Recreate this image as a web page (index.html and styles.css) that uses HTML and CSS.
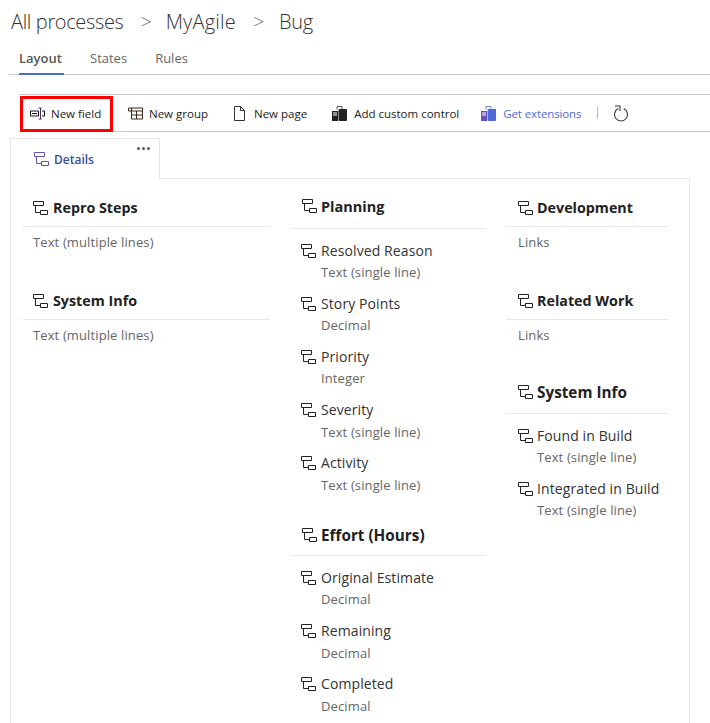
FILE: index.html
```html
<!DOCTYPE html>
<html lang="en">
<head>
<meta charset="utf-8">
<title>Bug layout</title>
<link rel="stylesheet" href="styles.css">
</head>
<body>
<svg class="defs" width="0" height="0" aria-hidden="true">
  <symbol id="tree" viewBox="0 0 15 14">
    <path d="M.5.5h10v4H.5zM7.500 9.500h7v4h-7zM2.500 4.500v7h5" fill="none" stroke="currentColor"/>
  </symbol>
</svg>
<header class="crumbs">
  <span>All processes</span><span class="sep sep-a">&gt;</span><span class="crumb-mid">MyAgile</span><span class="sep sep-b">&gt;</span><span>Bug</span>
</header>
<nav class="tabs">
  <a class="tab active">Layout</a><a class="tab">States</a><a class="tab tab-rules">Rules</a>
</nav>
<div class="toolbar">
  <button class="tool tool-field">
    <svg class="ti" viewBox="0 0 15 14"><path d="M.5 4.500h8v5h-8zM2 7h5" fill="none" stroke="#111"/><path d="M8.500 1.500h3M8.500 12.500h3M10.500 1.500v11" fill="none" stroke="#4a2a6a"/><path d="M12 4.500h2.500v5H12" fill="none" stroke="#111"/></svg>
    <span>New field</span>
  </button>
  <button class="tool tool-group">
    <svg class="ti" viewBox="0 0 15 14"><path d="M.5 1.500h14v11h-11v-11M.5 1.500v3h14M3.500 8.500h11M8.500 4.500v8" fill="none" stroke="#3a2a18"/></svg>
    <span>New group</span>
  </button>
  <button class="tool tool-page">
    <svg class="ti" viewBox="0 0 15 15"><path d="M2.500.5h6l4 4v10h-10zM8.500.5v4h4" fill="none" stroke="#333"/></svg>
    <span>New page</span>
  </button>
  <button class="tool tool-custom">
    <svg class="ti" viewBox="0 0 15 15"><path d="M5 3.500V.5h5v3" fill="none" stroke="#555"/><rect x="6.500" y="3" width="8.500" height="12" rx="1" fill="#222"/><rect x="0" y="5" width="6" height="10" fill="#222"/><path d="M1 7h4M1 9h4" stroke="#fff"/></svg>
    <span>Add custom control</span>
  </button>
  <button class="tool tool-ext">
    <svg class="ti" viewBox="0 0 15 15"><path d="M5 3.500V.5h5v3" fill="none" stroke="#7a86c8"/><rect x="6.500" y="3" width="8.500" height="12" rx="1" fill="#4f6bd8"/><rect x="0" y="5" width="6" height="10" fill="#6a4fc0"/><path d="M1 7h4M1 9h4" stroke="#fff"/></svg>
    <span>Get extensions</span>
  </button>
  <i class="vsep"></i>
  <button class="tool tool-refresh" aria-label="Refresh">
    <svg class="ti-r" viewBox="0 0 16 17"><path d="M5.200 3.600A6.500 6.500 0 1 0 10.800 3.600" fill="none" stroke="#333" stroke-width="1.100"/><path d="M2 1h5v5" fill="none" stroke="#333" stroke-width="1.100"/></svg>
  </button>
</div>
<div class="page-tabs">
  <div class="page-tab">
    <svg class="tree tree-purple"><use href="#tree"/></svg>
    <span>Details</span>
    <b class="dots"><i></i><i></i><i></i></b>
  </div>
</div>
<main class="panel">
  <section class="col col-1">
    <div class="group">
      <h2 class="head first"><svg class="tree"><use href="#tree"/></svg>Repro Steps</h2>
      <p class="plain">Text (multiple lines)</p>
    </div>
    <div class="group">
      <h2 class="head next"><svg class="tree"><use href="#tree"/></svg>System Info</h2>
      <p class="plain">Text (multiple lines)</p>
    </div>
  </section>
  <section class="col col-2">
    <div class="group">
      <h2 class="head first-tall"><svg class="tree"><use href="#tree"/></svg>Planning</h2>
      <div class="field"><h3><svg class="tree"><use href="#tree"/></svg>Resolved Reason</h3><p>Text (single line)</p></div>
      <div class="field"><h3><svg class="tree"><use href="#tree"/></svg>Story Points</h3><p>Decimal</p></div>
      <div class="field"><h3><svg class="tree"><use href="#tree"/></svg>Priority</h3><p>Integer</p></div>
      <div class="field"><h3><svg class="tree"><use href="#tree"/></svg>Severity</h3><p class="low">Text (single line)</p></div>
      <div class="field"><h3><svg class="tree"><use href="#tree"/></svg>Activity</h3><p class="low">Text (single line)</p></div>
    </div>
    <div class="group">
      <h2 class="head after-fields"><svg class="tree"><use href="#tree"/></svg>Effort (Hours)</h2>
      <div class="field"><h3><svg class="tree"><use href="#tree"/></svg>Original Estimate</h3><p>Decimal</p></div>
      <div class="field"><h3><svg class="tree"><use href="#tree"/></svg>Remaining</h3><p class="low">Decimal</p></div>
      <div class="field"><h3><svg class="tree"><use href="#tree"/></svg>Completed</h3><p class="low">Decimal</p></div>
    </div>
  </section>
  <section class="col col-3">
    <div class="group">
      <h2 class="head first"><svg class="tree"><use href="#tree"/></svg>Development</h2>
      <p class="plain">Links</p>
    </div>
    <div class="group">
      <h2 class="head next"><svg class="tree"><use href="#tree"/></svg>Related Work</h2>
      <p class="plain">Links</p>
    </div>
    <div class="group">
      <h2 class="head last"><svg class="tree"><use href="#tree"/></svg>System Info</h2>
      <div class="field"><h3><svg class="tree"><use href="#tree"/></svg>Found in Build</h3><p>Text (single line)</p></div>
      <div class="field"><h3><svg class="tree"><use href="#tree"/></svg>Integrated in Build</h3><p>Text (single line)</p></div>
    </div>
  </section>
</main>
</body>
</html>
```

FILE: styles.css
```css
* { box-sizing: border-box; }
html, body { height: 723px; overflow: hidden; }
body {
  margin: 0;
  background: #fff;
  color: #222;
  font-family: "Open Sans", "Liberation Sans", sans-serif;
}
.defs { position: absolute; }

.crumbs {
  height: 44px;
  padding: 7px 0 0 11px;
  display: flex;
  font-size: 20px;
  line-height: 30px;
  font-weight: 300;
  color: #333;
  letter-spacing: -0.35px;
}
.sep { color: #666; }
.sep-a { margin: 0 14px 0 17px; }
.sep-b { margin: 0 15px 0 17px; }
.crumb-mid { letter-spacing: 0.2px; }

.tabs {
  height: 31px;
  margin-left: 9px;
  padding-left: 10px;
  display: flex;
  gap: 26px;
  border-bottom: 1px solid #c8c8c8;
}
.tab {
  height: 31px;
  padding-top: 4px;
  font-size: 13px;
  line-height: 20px;
  color: #666;
}
.tab-rules { margin-left: 2px; }
.tab.active {
  font-weight: 600;
  color: #555;
  border-bottom: 2px solid #4a6fc8;
  width: 45px;
  white-space: nowrap;
}

.toolbar {
  margin: 19px 0 0 19px;
  height: 38px;
  display: flex;
  align-items: center;
  border-top: 1px solid #c8c8c8;
  border-bottom: 1px solid #c8c8c8;
}
.tool {
  display: flex;
  align-items: center;
  border: 0;
  background: none;
  padding: 0;
  font: inherit;
  font-size: 11.500px;
  color: #222;
  white-space: nowrap;
}
.ti { width: 15px; height: 15px; margin-right: 6px; flex: none; }
.tool-field {
  margin: 1px 0 0 1px;
  width: 93px;
  height: 36px;
  padding-left: 7px;
  border: 3px solid #f00;
}
.tool-group { margin-left: 15px; }
.tool-page { margin-left: 24px; }
.tool-custom { margin-left: 25px; }
.tool-ext { margin-left: 22px; color: #4f6bd8; letter-spacing: -0.12px; }
.tool-page .ti, .tool-custom .ti, .tool-ext .ti { margin-right: 7px; }
.vsep { width: 1px; height: 12px; margin-left: 16px; background: #bbb; }
.tool-refresh { margin-left: 15px; }
.ti-r { width: 16px; height: 17px; display: block; }

.page-tabs { margin: 6px 0 0 10px; height: 41px; }
.page-tab {
  position: relative;
  width: 150px;
  height: 41px;
  padding-left: 23px;
  display: flex;
  align-items: center;
  font-size: 12px;
  font-weight: 600;
  color: #33509c;
  background: #fff;
  border: 1px solid #e6e6e6;
  border-bottom: 0;
}
.page-tab span { padding-top: 1px; }
.dots {
  position: absolute;
  top: 8px;
  right: 9px;
  display: flex;
  gap: 2px;
}
.dots i { width: 3px; height: 3px; border-radius: 50%; background: #4a5a80; }

.tree {
  width: 15px;
  height: 14px;
  margin-right: 5px;
  flex: none;
  color: #222;
}
.tree-purple { color: #6a4fa8; }

.panel {
  margin: -1px 0 0 10px;
  width: 680px;
  height: 560px;
  padding: 0 0 0 12px;
  display: flex;
  border: 1px solid #e6e6e6;
  border-bottom: 0;
}
.col { flex: none; }
.col-1 { width: 247px; }
.col-2 { width: 194px; margin-left: 22px; }
.col-3 { width: 162px; margin-left: 20px; }

.head {
  margin: 0;
  padding-left: 10px;
  display: flex;
  align-items: flex-start;
  font-size: 14.300px;
  line-height: 24px;
  font-weight: 700;
  color: #222;
  border-bottom: 1px solid #e6e6e6;
}
.head .tree { margin-top: 5px; }
.first { height: 48px; padding-top: 17px; }
.first-tall { height: 50px; padding-top: 16px; font-size: 14.500px; }
.first-tall .tree { margin-top: 4px; }
.next { height: 31px; margin-top: 36px; }
.after-fields { height: 33px; margin-top: 29px; font-size: 15.300px; }
.last { height: 34px; margin-top: 34px; font-size: 15.300px; }
.col-2 .head .tree { margin-right: 4px; }
.col-3 .head { padding-left: 12px; }
.col-3 .head .tree { margin-right: 4px; }

.plain {
  margin: 0;
  height: 26px;
  padding: 5px 0 0 10px;
  font-size: 13px;
  line-height: 20px;
  letter-spacing: 0.12px;
  color: #666;
}
.col-3 .plain { padding-left: 12px; }

.field { height: 53px; padding: 11px 0 0 9px; }
.col-3 .field { padding-left: 12px; }
.col-3 .field .tree { margin-right: 4px; }
.col-3 .field p { padding-left: 19px; }
h3 {
  margin: 0;
  display: flex;
  align-items: center;
  height: 21px;
  font-size: 14px;
  font-weight: 400;
  color: #333;
  letter-spacing: 0.1px;
}
h3 .tree { margin-top: 1px; }
.field p {
  margin: 0;
  padding: 1px 0 0 20px;
  font-size: 13px;
  line-height: 21px;
  letter-spacing: 0.12px;
  color: #666;
}
.field .low { padding-top: 2px; }
```
